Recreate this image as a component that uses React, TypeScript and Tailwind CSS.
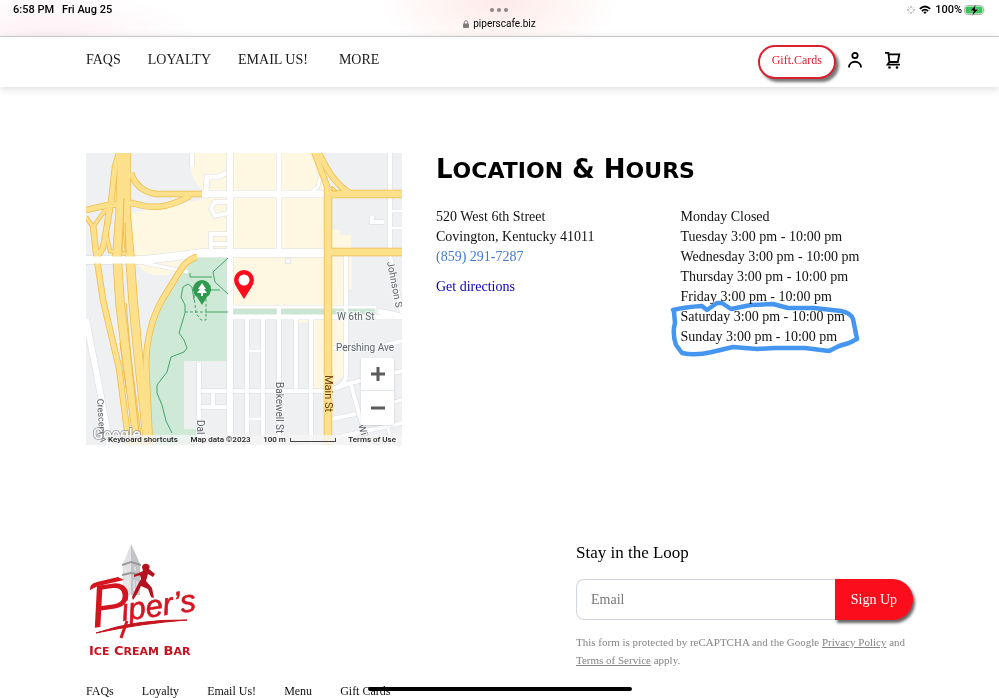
import { useState } from 'react'

const NAV_LINKS = ['FAQS', 'LOYALTY', 'EMAIL US!']
const FOOTER_LINKS = ['FAQs', 'Loyalty', 'Email Us!', 'Menu', 'Gift Cards']

const HOURS = [
  { day: 'Monday', time: 'Closed' },
  { day: 'Tuesday', time: '3:00 pm - 10:00 pm' },
  { day: 'Wednesday', time: '3:00 pm - 10:00 pm' },
  { day: 'Thursday', time: '3:00 pm - 10:00 pm' },
  { day: 'Friday', time: '3:00 pm - 10:00 pm' },
  { day: 'Saturday', time: '3:00 pm - 10:00 pm' },
  { day: 'Sunday', time: '3:00 pm - 10:00 pm' },
]

// Yellow roads, drawn twice: darker casing first, then the fill
const HIGHWAYS = [
  { d: 'M33 0 L29 14 L25 50 L17 95 L12 102', w: 5 },
  { d: 'M36 0 L34 60 L31 102 L34 150 L40 200 L52 292', w: 8 },
  { d: 'M40 0 L40 60 L44 105 L47 147 L52 200 L62 292', w: 8 },
  { d: 'M22 52 L20 80 L24 98 L42 101', w: 3 },
  { d: 'M0 57 L22 52 L46 50 C66 56 80 56 104 43', w: 5 },
  { d: 'M0 64 L7 74 L20 56', w: 3 },
  { d: 'M7 72 L10 100 L17 147 L33 215 L43 292', w: 5 },
  { d: 'M45 20 Q51 38 70 41 H116', w: 5 },
  { d: 'M111 104 Q101 106 94 118 L76 147 Q61 174 60 210 L64 292', w: 5 },
  { d: 'M228 -2 L242 36', w: 5 },
  { d: 'M232 -2 Q246 30 264 40', w: 5 },
  { d: 'M242 41 H316', w: 7 },
  { d: 'M242 99 H316', w: 7 },
  { d: 'M242 36 V292', w: 7 },
]

const STREETS = [
  { d: 'M114 41 H242', w: 7 },
  { d: 'M0 107 H58 L84 104 L116 100 H242', w: 8 },
  { d: 'M144 0 V292', w: 6 },
  { d: 'M193 0 V100', w: 5 },
  { d: 'M106 0 V14', w: 4 },
  { d: 'M120 38 L121 24 H132 L140 20', w: 5 },
  { d: 'M142 49 H129 L125 55 L129 63 L142 60', w: 4 },
  { d: 'M142 81 H125 V97 M125 91 H142', w: 4 },
  { d: 'M58 110 L102 119', w: 3 },
  { d: 'M304 0 V98', w: 4 },
  { d: 'M304 103 L316 160', w: 4 },
  { d: 'M306 58 H316 M306 75 H316', w: 3 },
  { d: 'M286 63 V69 H298', w: 4 },
  { d: 'M234 24 L232 34 L224 40', w: 3 },
  { d: 'M260 103 V222 Q260 232 247 236', w: 4 },
  { d: 'M147 154 H290', w: 3 },
  { d: 'M147 164 H316 M292 158 L316 163', w: 5 },
  { d: 'M161 166 V292 M177 166 V292 M193 155 V292 M210 166 V237 M225 166 V292', w: 4 },
  { d: 'M113 238 H240 L265 230 L316 218', w: 4 },
  { d: 'M161 198 H177 M161 266 H177', w: 3 },
  { d: 'M113 210 V292 M113 254 H144 M127 238 V254', w: 4 },
  { d: 'M0 166 L14 238 L24 292', w: 6 },
  { d: 'M247 195 H260 M300 192 L316 188', w: 4 },
  { d: 'M240 267 L270 261 M265 232 L282 292 M240 287 L316 270', w: 4 },
  { d: 'M300 268 L307 292 M304 250 L316 247', w: 3 },
]

function StoreMap() {
  return (
    <svg viewBox="0 0 316 292" preserveAspectRatio="xMidYMid slice" className="block h-full w-full" role="img" aria-label="Map of 520 West 6th Street">
      <rect width="316" height="292" fill="#eff0f2" />
      <path d="M104 0 H227 L242 40 V104 H266 V136 H257 V152 H147 V104 L104 106 L85 121 Q62 127 50 110 L46 102 V60 L118 46 V38 Q102 26 104 0Z M246 77 H254 V82 H265 V98 H246Z M227 166 H259 V222 L242 236 H227Z M212 166 H223 V170 H212Z" fill="#fef7e2" />
      <path d="M108 105 H142 V208 H98 V276 H112 V292 H62 L60 205 Q63 172 80 145Z" fill="#ceead6" />
      <path d="M147 156 H191 V161 H147Z M195 156 H288 L290 161 H195Z" fill="#c8e6d2" />
      {STREETS.map((s) => (
        <path key={s.d} d={s.d} fill="none" stroke="#dadde2" strokeWidth={s.w + 1} />
      ))}
      {STREETS.map((s) => (
        <path key={s.d} d={s.d} fill="none" stroke="#fff" strokeWidth={s.w} />
      ))}
      {HIGHWAYS.map((s) => (
        <path key={s.d} d={s.d} fill="none" stroke="#eebb48" strokeWidth={s.w + 1.5} />
      ))}
      {HIGHWAYS.map((s) => (
        <path key={s.d} d={s.d} fill="none" stroke="#fce08c" strokeWidth={s.w} />
      ))}
      <path d="M0 107 H58" stroke="#fff" strokeWidth="7" />
      <path d="M38 45 L36 100 M39 70 L40 100 M40 150 L46 215 L53 280 M34 190 L40 235" fill="none" stroke="#eebb48" />
      <path d="M246 33 L251 38 H246Z" fill="#fce08c" stroke="#eebb48" />
      <circle cx="202" cy="108" r="3" fill="#fff" stroke="#dadde2" />

      {/* Park paths */}
      <g fill="none" stroke="#45a367">
        <path d="M142 105 L127 119 L129 129 L142 141 M104 120 V124 H126 M124 137 H134 M108 147 L106 134 L102 131 L97 134 L95 144 L99 152 V160 L93 180 L98 187 L101 195 L98 199 L85 204 L81 219 L71 232 L71 240 L76 252 L80 268 L86 280 M119 159 H142" />
        <path d="M99 159 H119 M108 142 L110 160 L115 167 H120 V145" strokeDasharray="3 2" />
      </g>

      <g fontFamily="Roboto, 'Liberation Sans', sans-serif" fontSize="10" fill="#5f6368" stroke="#f5f6f7" strokeWidth="2" paintOrder="stroke">
        <text x="251" y="167">W 6th St</text>
        <text x="250" y="198">Pershing Ave</text>
        <text transform="translate(190 229) rotate(90)">Bakewell St</text>
        <text transform="translate(111 267) rotate(90)">Dal</text>
        <text transform="translate(11 246) rotate(86)" fontSize="9">Crescent A</text>
        <text transform="translate(301 109) rotate(79)">Johnson S</text>
        <text transform="translate(272 272) rotate(74)">Wil</text>
        <text transform="translate(239 222) rotate(90)" fill="#6b3c10" stroke="#fce08c" fontSize="11">Main St</text>
      </g>

      {/* Park marker */}
      <path d="M116 152 L111 144 Q107 141 107 136 A9 9 0 0 1 125 136 Q125 141 121 144Z" fill="#2f9a50" />
      <path d="M116 130 L112 136 H114 L111 140 H115 V143 H117 V140 H121 L118 136 H120Z" fill="#fff" />
      {/* Store marker */}
      <path d="M158 146 L151 135 Q148 131 148 127 A10 10 0 0 1 168 127 Q168 131 165 135Z" fill="#fb0d1b" />
      <circle cx="158" cy="127" r="5.5" fill="#fff" />

      <g fontFamily="Roboto, sans-serif" fill="#fff" stroke="#8b8f94">
        <text x="7" y="286" fontSize="15" fontWeight="500" strokeWidth="1.5" paintOrder="stroke">Google</text>
      </g>
    </svg>
  )
}

function MapCard() {
  const [, setZoom] = useState(16)

  return (
    <div className="relative h-73 w-79 shrink-0 overflow-hidden">
      <StoreMap />
      <div className="absolute right-2 bottom-5 flex w-[33px] flex-col bg-white shadow-sm">
        <button type="button" aria-label="Zoom in" onClick={() => setZoom((z) => z + 1)} className="flex h-[33px] items-center justify-center border-b border-gray-200">
          <svg width="16" height="16" viewBox="0 0 16 16" stroke="#5b5b5b" strokeWidth="3">
            <path d="M8 1 V15 M1 8 H15" />
          </svg>
        </button>
        <button type="button" aria-label="Zoom out" onClick={() => setZoom((z) => z - 1)} className="flex h-[34px] items-center justify-center">
          <svg width="16" height="16" viewBox="0 0 16 16" stroke="#5b5b5b" strokeWidth="3">
            <path d="M1 8 H15" />
          </svg>
        </button>
      </div>
      <div className="absolute right-0 bottom-0 left-5 flex h-[10px] items-center justify-between bg-[#f5f5f5]/80 pr-1.5 pl-0.5 font-[Roboto,sans-serif] text-[8px] leading-[10px] font-medium whitespace-nowrap text-[#222]">
        <button type="button">Keyboard shortcuts</button>
        <span>Map data ©2023</span>
        <span className="flex items-center gap-1">
          100 m
          <span className="h-1 w-[46px] border-x border-b border-[#444]" />
        </span>
        <a href="#terms">Terms of Use</a>
      </div>
    </div>
  )
}

function StatusBar() {
  return (
    <div className="grid h-9 grid-cols-3 bg-[radial-gradient(ellipse_120px_60px_at_50%_0%,#fdeae8,transparent),radial-gradient(ellipse_150px_40px_at_5%_90%,#fdf2f6,transparent)] px-[13px] font-[Roboto,sans-serif] text-[11px] leading-[14px] font-medium text-black">
      <div className="flex gap-2 pt-[3px]">
        <span>6:58 PM</span>
        <span>Fri Aug 25</span>
      </div>
      <div className="flex flex-col items-center pt-2">
        <div className="flex gap-[3px]">
          <span className="size-1 rounded-full bg-[#8c8585]" />
          <span className="size-1 rounded-full bg-[#8c8585]" />
          <span className="size-1 rounded-full bg-[#8c8585]" />
        </div>
        <div className="mt-[5px] flex items-center gap-1 text-[10px] font-normal">
          <svg width="6" height="8" viewBox="0 0 6 8">
            <path d="M1.3 4 V2.4 a1.7 1.7 0 0 1 3.4 0 V4" fill="none" stroke="#807c7c" />
            <rect y="3.5" width="6" height="4.5" rx="1" fill="#807c7c" />
          </svg>
          piperscafe.biz
        </div>
      </div>
      <div className="flex items-start justify-end gap-1 pt-[3px]">
        <svg width="8" height="14" viewBox="0 0 8 14" stroke="#888" strokeWidth="0.9">
          <path d="M4 3 V5 M4 9 V11 M0 7 H2 M6 7 H8" />
          <path d="M1.2 4.2 L2.5 5.5 M5.5 8.5 L6.8 9.8 M6.8 4.2 L5.5 5.5 M2.5 8.5 L1.2 9.8" stroke="#bbb" />
        </svg>
        <svg width="12" height="14" viewBox="0 0 12 14" fill="none" stroke="#000" strokeWidth="1.7">
          <path d="M0.8 5.8 Q6 1.2 11.2 5.8" />
          <path d="M2.9 8 Q6 5.4 9.1 8" />
          <path d="M4.4 9.2 Q6 7.9 7.6 9.2 L6 11Z" fill="#000" stroke="none" />
        </svg>
        <span>100%</span>
        <svg width="22" height="14" viewBox="0 0 22 14" className="-ml-0.5">
          <rect x="0.5" y="2.5" width="19" height="9" rx="3" fill="#fff" stroke="#b5b5b5" />
          <rect x="1.5" y="3.5" width="17" height="7" rx="2" fill="#35c759" />
          <path d="M20.5 5.5 Q22 7 20.5 8.5Z" fill="#b5b5b5" />
          <path d="M12 1.5 L6 7.8 H9.5 L8 13 L14.5 6.2 H11Z" fill="#000" stroke="#fff" strokeWidth="0.4" />
        </svg>
      </div>
    </div>
  )
}

function Header() {
  return (
    <header className="relative border-t border-[#c9c7c8] bg-white shadow-[0_2px_8px_rgba(0,0,0,0.14)]">
      <div className="flex h-[50px] items-center justify-between pr-[97px] pl-[86px]">
        <nav className="flex gap-[27px] pb-1 text-[14px] leading-5 text-[#1a1a1a]">
          {NAV_LINKS.map((label) => (
            <a key={label} href="#">{label}</a>
          ))}
          <button type="button" className="ml-1">MORE</button>
        </nav>
        <div className="flex items-center">
          <a
            href="#gift-cards"
            className="flex h-[34px] items-center rounded-full border-2 border-[#d9202e] bg-white px-3 pb-1 text-[12px] text-[#d9202e] shadow-[3px_3px_3px_#777]"
          >
            Gift.Cards
          </a>
          <button type="button" aria-label="Account" className="ml-2.5 pb-1">
            <svg width="18" height="20" viewBox="0 0 18 20" fill="none" stroke="#000" strokeWidth="1.8">
              <circle cx="9" cy="5.5" r="2.7" />
              <path d="M3 17.5 C3 9.8 15 9.8 15 17.5" />
            </svg>
          </button>
          <button type="button" aria-label="Cart" className="ml-5 pb-1">
            <svg width="18" height="20" viewBox="0 0 18 20" fill="none" stroke="#000" strokeWidth="1.8">
              <path d="M1 2.8 H4.4 L5.4 12 H13.8 L15.3 4.4 H4.6 M5.4 12 L3.6 14.6 H16" />
              <circle cx="5.5" cy="17.5" r="1.3" fill="#000" stroke="none" />
              <circle cx="13" cy="17.5" r="1.3" fill="#000" stroke="none" />
            </svg>
          </button>
        </div>
      </div>
    </header>
  )
}

// Hand-drawn marker loop around the weekend rows
function MarkerLoop() {
  return (
    <svg width="192" height="60" viewBox="0 0 192 60" className="pointer-events-none absolute -bottom-2.5 -left-3 mix-blend-multiply" fill="none" stroke="#4596f0" strokeWidth="4.5" strokeLinejoin="round" strokeLinecap="round">
      <path d="M4 13 Q16 10 33 9 L38 13 L48 6 L53 6 L62 12 L82 8 L104 7 L119 11 L145 11 L172 14 Q182 16 184 22 L188 42 L180 46 L170 49 L160 54 L136 51 L106 51 L88 52 L64 50 L43 55 Q26 59 13 56 L7 48 Q3 36 6 26 L5 15" />
    </svg>
  )
}

function Location() {
  return (
    <section className="flex gap-[34px] px-[86px] pt-[66px]">
      <MapCard />
      <div className="flex-1">
        <h2 className="font-['DejaVu_Sans',sans-serif] text-[26px] leading-8 font-bold whitespace-nowrap text-black">
          L<span className="text-[22px] uppercase">ocation</span> &amp; H<span className="text-[22px] uppercase">ours</span>
        </h2>
        <div className="mt-5 grid grid-cols-2 gap-3 text-[14px] leading-5 whitespace-nowrap text-[#111]">
          <address className="not-italic">
            <p>520 West 6th Street</p>
            <p>Covington, Kentucky 41011</p>
            <a href="tel:8592917287" className="block text-[#4279d4]">(859) 291-7287</a>
            <a href="#directions" className="mt-2.5 block text-[#0c00b8]">Get directions</a>
          </address>
          <div className="relative self-start">
            <ul>
              {HOURS.map((h) => (
                <li key={h.day}>{h.day} {h.time}</li>
              ))}
            </ul>
            <MarkerLoop />
          </div>
        </div>
      </div>
    </section>
  )
}

function Logo() {
  return (
    <svg width="110" height="120" viewBox="0 0 110 120" className="overflow-visible" role="img" aria-label="Piper's Ice Cream Bar">
      {/* Clock tower */}
      <path d="M45 3 L37 23 V54 H54 V23Z" fill="#e2e2e4" />
      <path d="M45 3 V54 H54 V23Z" fill="#c3c4c7" />
      <path d="M36 23 L45 20 L55 23 V25 L45 22 L36 25Z M36 33 L45 31 L55 33 V35 L45 33 L36 35Z" fill="#97989c" />
      <path d="M39 40 V50 M42 39 V50 M48 39 V50 M51 40 V50 M40 27 V31 M49 26 V30" stroke="#f4f4f4" />

      {/* Dancing piper */}
      <path d="M48 34 L57 30 L56 26 Q57 22 61 23 Q65 24 63 28 L69 33 L67 36 L62 33 L60 40 L66 47 L68 57 L65 56 L62 48 L55 45 L51 53 L47 59 L46 56 L51 45 L55 38 L54 34 L48 36Z" fill="#b5121f" />
      <g fill="#d4151f" fontFamily="'Liberation Sans', sans-serif" fontStyle="italic">
        <text transform="translate(7 87) rotate(-8)" fontSize="60">P</text>
        <text transform="translate(37 80) rotate(-8)" fontSize="31" stroke="#d4151f" strokeWidth="0.6">iper’s</text>
      </g>
      <path d="M4 49 Q3 43 11 41 L32 36 L38 39 L12 45Z" fill="#d4151f" />
      <path d="M10 92 Q50 78 101 79 Q58 82 10 92Z" fill="#c5141f" stroke="#c5141f" />
      <path d="M41 80 L35 97" stroke="#d4151f" strokeWidth="3" />

      <text x="3" y="114" fontFamily="'DejaVu Sans', sans-serif" fontWeight="700" fontSize="13" fill="#c5141f">
        I<tspan fontSize="11">CE</tspan> C<tspan fontSize="11">REAM</tspan> B<tspan fontSize="11">AR</tspan>
      </text>
    </svg>
  )
}

function Footer() {
  const [email, setEmail] = useState('')

  return (
    <footer className="px-[86px] pt-24">
      <div className="flex justify-between">
        <Logo />
        <div className="w-[337px]">
          <h3 className="text-[17px] leading-6 text-black">Stay in the Loop</h3>
          <form className="mt-3.5 flex h-[41px] text-[14px]" onSubmit={(e) => e.preventDefault()}>
            <input
              type="email"
              aria-label="Email"
              placeholder="Email"
              value={email}
              onChange={(e) => setEmail(e.target.value)}
              className="min-w-0 flex-1 rounded-l-lg border border-r-0 border-gray-300 px-3.5 placeholder:text-[#777]"
            />
            <button type="submit" className="rounded-r-full bg-[#fc0d1b] px-4 whitespace-nowrap text-white shadow-[2px_3px_3px_#666]">
              Sign Up
            </button>
          </form>
          <p className="mt-[13px] text-[11px] leading-[18px] text-[#858585]">
            This form is protected by reCAPTCHA and the Google <a href="#privacy" className="underline">Privacy Policy</a> and{' '}
            <a href="#tos" className="underline">Terms of Service</a> apply.
          </p>
        </div>
      </div>
      <nav className="mt-[15px] flex gap-7 text-[12px] leading-[14px] text-[#111]">
        {FOOTER_LINKS.map((label) => (
          <a key={label} href="#">{label}</a>
        ))}
      </nav>
    </footer>
  )
}

export default function App() {
  return (
    <div className="relative min-h-screen bg-white font-['Liberation_Serif',serif]">
      <StatusBar />
      <Header />
      <main>
        <Location />
      </main>
      <Footer />
      {/* Home indicator */}
      <div className="fixed bottom-[7px] left-1/2 h-1 w-[264px] -translate-x-1/2 rounded-full bg-black" />
    </div>
  )
}
